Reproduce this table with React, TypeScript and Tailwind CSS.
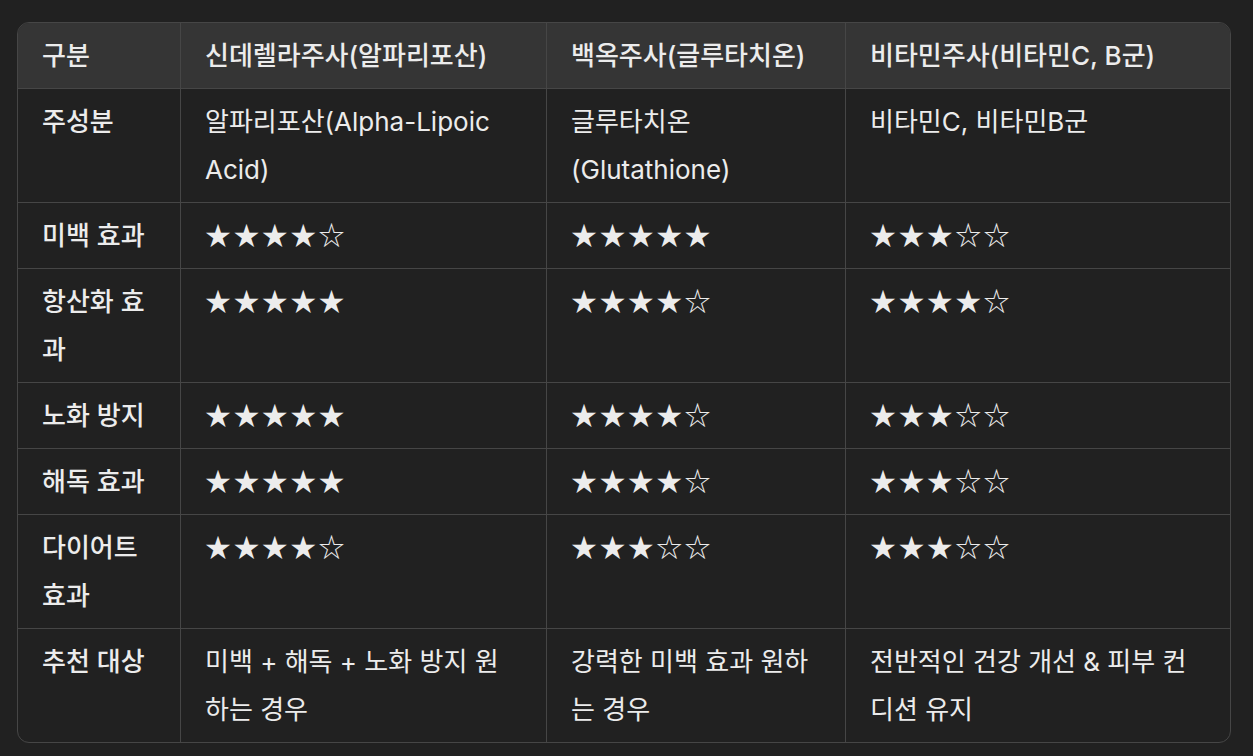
import type { FC } from 'react'

type Row = {
  label: string
  cells: [string, string, string]
  stars?: boolean
}

const headers = ['구분', '신데렐라주사(알파리포산)', '백옥주사(글루타치온)', '비타민주사(비타민C, B군)']

const rows: Row[] = [
  { label: '주성분', cells: ['알파리포산(Alpha-Lipoic Acid)', '글루타치온 (Glutathione)', '비타민C, 비타민B군'] },
  { label: '미백 효과', cells: ['★★★★☆', '★★★★★', '★★★☆☆'], stars: true },
  { label: '항산화 효과', cells: ['★★★★★', '★★★★☆', '★★★★☆'], stars: true },
  { label: '노화 방지', cells: ['★★★★★', '★★★★☆', '★★★☆☆'], stars: true },
  { label: '해독 효과', cells: ['★★★★★', '★★★★☆', '★★★☆☆'], stars: true },
  { label: '다이어트 효과', cells: ['★★★★☆', '★★★☆☆', '★★★☆☆'], stars: true },
  { label: '추천 대상', cells: ['미백 + 해독 + 노화 방지 원하는 경우', '강력한 미백 효과 원하는 경우', '전반적인 건강 개선 & 피부 컨디션 유지'] },
]

const grid = 'grid grid-cols-[163px_366px_299px_1fr]'
const cell = 'px-[24px] pt-[9px] pb-[8px] leading-[48px] border-[#464646]'

const App: FC = () => {
  return (
    <div
      className="min-h-[756px] w-full bg-[#212121] pt-[22px] pl-[17px] text-[26px] text-[#ececec]"
      style={{ fontFamily: 'Inter, "Noto Sans CJK KR", sans-serif' }}
    >
      <div className="w-[1214px] overflow-hidden rounded-xl border border-[#464646]">
        <div className={`${grid} bg-[#353535] font-medium`}>
          {headers.map((h, i) => (
            <div key={h} className={`${cell} border-b ${i < 3 ? 'border-r' : ''}`}>
              {h}
            </div>
          ))}
        </div>
        {rows.map((row, r) => (
          <div key={row.label} className={grid}>
            <div className={`${cell} border-r font-medium ${r < rows.length - 1 ? 'border-b' : ''}`}>
              {row.label}
            </div>
            {row.cells.map((c, i) => (
              <div
                key={i}
                className={`${cell} ${i < 2 ? 'border-r' : ''} ${r < rows.length - 1 ? 'border-b' : ''}`}
              >
                {row.stars ? (
                  <span className="relative -top-[2px] inline-block align-top leading-[48px] font-['Noto_Sans_CJK_KR'] tracking-[2.4px]">
                    {c}
                  </span>
                ) : (
                  c
                )}
              </div>
            ))}
          </div>
        ))}
      </div>
    </div>
  )
}

export default App
